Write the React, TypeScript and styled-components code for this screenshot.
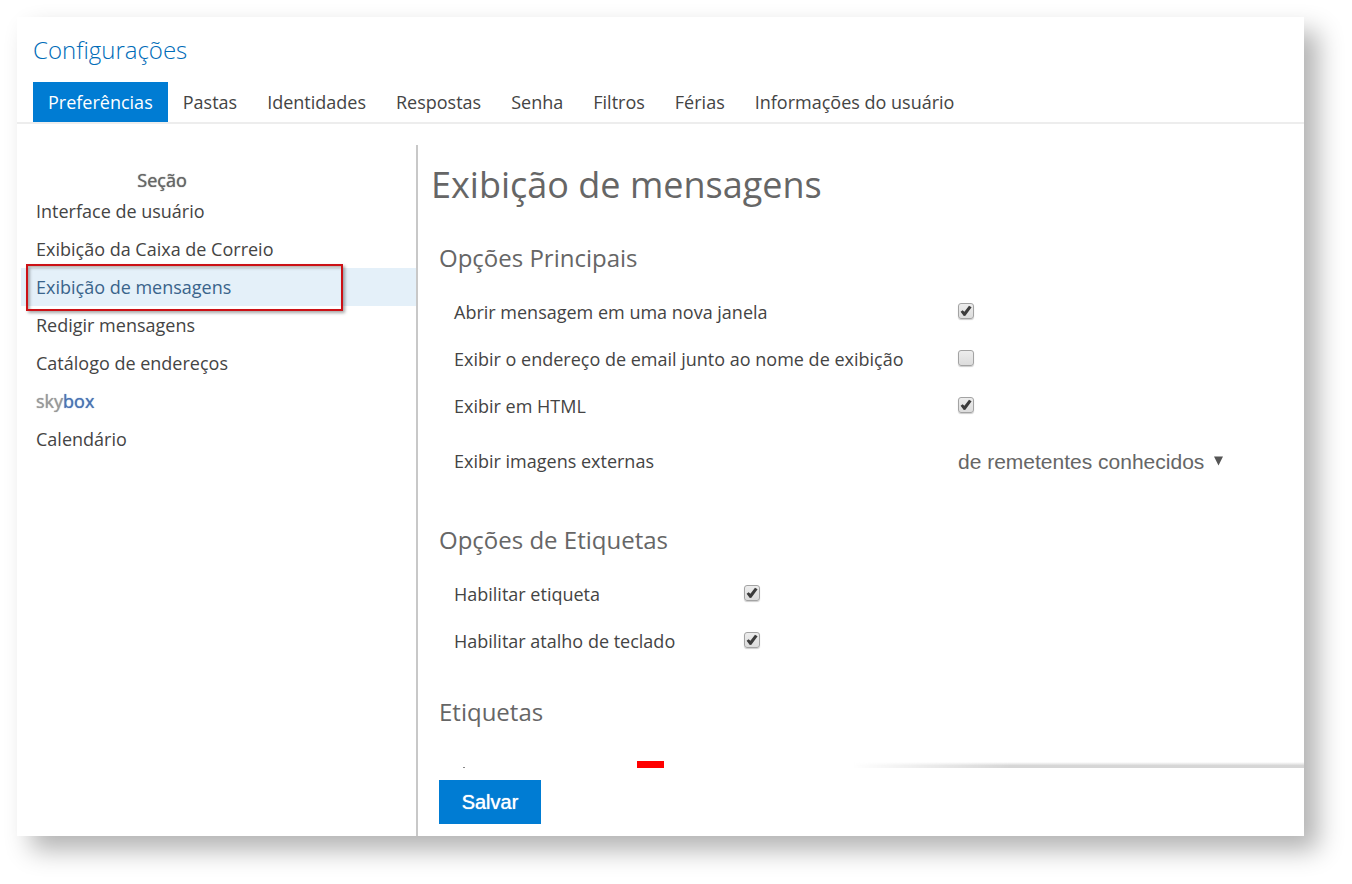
import React, { useState } from "react";
import styled, { createGlobalStyle, css } from "styled-components";

const GlobalStyle = createGlobalStyle`
  *, *::before, *::after { box-sizing: border-box; }
  body {
    margin: 0;
    background: #fff;
    color: #444;
    font: 400 18px/24px "Open Sans", sans-serif;
  }
`;

const emphasis = css`
  font-weight: 400;
  text-shadow: 0 0 1px currentColor;
`;

const Page = styled.div`
  min-height: 100vh;
  padding: 17px 48px 48px 17px;
  display: flex;
`;

const Panel = styled.div`
  flex: 1;
  min-width: 0;
  display: flex;
  flex-direction: column;
  background: #fff;
  box-shadow: 14px 14px 24px rgba(0, 0, 0, 0.3);
`;

const PageTitle = styled.h1`
  margin: 0;
  padding: 17px 16px 16px;
  color: #006cb8;
  font-size: 24px;
  font-weight: 300;
  line-height: 32px;
`;

const Tabs = styled.nav`
  display: flex;
  padding: 0 16px;
  border-bottom: 2px solid #ededed;
`;

const Tab = styled.a<{ $active?: boolean }>`
  padding: 0 15px;
  line-height: 40px;
  text-decoration: none;
  white-space: nowrap;
  color: ${(p) => (p.$active ? "#fff" : "#444")};
  background: ${(p) => (p.$active ? "#007cd3" : "transparent")};
`;

const Body = styled.div`
  flex: 1;
  display: flex;
  padding-top: 21px;
`;

const Sidebar = styled.aside`
  flex: 0 0 401px;
  padding: 24px 0 0 4px;
  border-right: 2px solid #c8c8c8;
`;

const SidebarTitle = styled.h2`
  ${emphasis}
  width: 282px;
  margin: 0;
  color: #666;
  font-size: 18px;
  line-height: 23px;
  text-align: center;
`;

const SectionList = styled.ul`
  list-style: none;
  margin: 0;
  padding: 0;
`;

const SectionItem = styled.li<{ $selected?: boolean }>`
  position: relative;
  background: ${(p) => (p.$selected ? "#e4f0f9" : "transparent")};
`;

const SectionLink = styled.a<{ $selected?: boolean }>`
  display: block;
  padding: 0 15px;
  line-height: 38px;
  text-decoration: none;
  color: ${(p) => (p.$selected ? "#3a648b" : "#444")};
`;

const Brand = styled.span<{ $blue?: boolean }>`
  ${emphasis}
  color: ${(p) => (p.$blue ? "#4a74b4" : "#999")};
`;

const Highlight = styled.span`
  position: absolute;
  inset: -4px 73px -5px 5px;
  border: 2px solid #cc1116;
  box-shadow: 2px 2px 3px rgba(0, 0, 0, 0.35), inset 2px 2px 3px rgba(0, 0, 0, 0.3);
  pointer-events: none;
`;

const Main = styled.main`
  flex: 1;
  min-width: 0;
  display: flex;
  flex-direction: column;
`;

const Content = styled.div`
  flex: 1;
  display: flex;
  flex-direction: column;
  gap: 23px;
  padding: 15px 13px 0;
`;

const Heading = styled.h2`
  margin: 0;
  color: #666;
  font-size: 36px;
  font-weight: 400;
  line-height: 50px;
`;

const Group = styled.section<{ $label: number }>`
  padding: 0 8px;
  --label: ${(p) => p.$label}px;
`;

const GroupTitle = styled.h3`
  margin: 0 0 5px;
  color: #666;
  font-size: 24px;
  font-weight: 400;
  line-height: 50px;
`;

const Row = styled.div<{ $tall?: boolean }>`
  display: grid;
  grid-template-columns: var(--label) auto;
  justify-content: start;
  align-items: center;
  height: ${(p) => (p.$tall ? 63 : 47)}px;
  padding-left: 15px;
`;

const CheckWrap = styled.span`
  display: grid;
  padding-bottom: 2px;

  > * { grid-area: 1 / 1; }
`;

const CheckInput = styled.input`
  appearance: none;
  width: 16px;
  height: 16px;
  margin: 0;
  border: 1px solid #a3a3a3;
  border-radius: 3px;
  background: linear-gradient(#ededed, #dcdcdc);
  box-shadow: 0 1px 1px rgba(0, 0, 0, 0.2);

  & + svg { visibility: hidden; }
  &:checked + svg { visibility: visible; }
`;

const CheckMark = styled.svg`
  pointer-events: none;
`;

const SelectWrap = styled.span`
  display: flex;
  align-items: center;
`;

const Select = styled.select`
  appearance: none;
  margin: 0 -20px 0 0;
  padding: 2px 28px 0 0;
  border: 0;
  border-radius: 0;
  background: transparent;
  color: #666;
  font: 21px/24px "Liberation Sans", Arial, sans-serif;
`;

const Arrow = styled.svg`
  pointer-events: none;
`;

const LabelPreview = styled.div`
  display: grid;
  grid-template-columns: var(--label) 27px;
  align-items: end;
  height: 7px;
  margin-top: 24px;
  padding-left: 15px;
`;

const Tick = styled.span`
  width: 2px;
  height: 1px;
  margin-left: 9px;
  background: #888;
`;

const Swatch = styled.span`
  height: 7px;
  background: #f00;
`;

const Footer = styled.footer`
  position: relative;
  padding: 12px 21px;
`;

const FooterShade = styled.span`
  position: absolute;
  right: 0;
  bottom: 100%;
  width: 51%;
  height: 6px;
  background: linear-gradient(to bottom, transparent, #d6d6d6 60%);
  mask-image: linear-gradient(to right, transparent, #000 35%);
`;

const SaveButton = styled.button`
  display: block;
  min-width: 102px;
  height: 44px;
  padding: 0 22px;
  border: 0;
  background: #007cd3;
  color: #fff;
  font: 20px/24px "Liberation Sans", Arial, sans-serif;
  text-shadow: 0 0 1px currentColor;
`;

const tabs = [
  "Preferências",
  "Pastas",
  "Identidades",
  "Respostas",
  "Senha",
  "Filtros",
  "Férias",
  "Informações do usuário",
];

const sections: React.ReactNode[] = [
  "Interface de usuário",
  "Exibição da Caixa de Correio",
  "Exibição de mensagens",
  "Redigir mensagens",
  "Catálogo de endereços",
  <>
    <Brand>sky</Brand>
    <Brand $blue>box</Brand>
  </>,
  "Calendário",
];

function CheckRow({ id, label, initial }: { id: string; label: string; initial?: boolean }) {
  const [checked, setChecked] = useState(Boolean(initial));
  return (
    <Row>
      <label htmlFor={id}>{label}</label>
      <CheckWrap>
        <CheckInput
          id={id}
          type="checkbox"
          checked={checked}
          onChange={(e) => setChecked(e.target.checked)}
        />
        <CheckMark width="16" height="16" viewBox="0 0 16 16" aria-hidden="true">
          <path d="M2.6 8.8 4.6 7.2 6.4 8.8 11 2.8 13.6 4.2 7.4 12.8 5.8 13Z" fill="#3c3c3c" />
        </CheckMark>
      </CheckWrap>
    </Row>
  );
}

export default function App() {
  return (
    <>
      <GlobalStyle />
      <Page>
        <Panel>
          <PageTitle>Configurações</PageTitle>
          <Tabs>
            {tabs.map((tab, i) => (
              <Tab key={tab} href="#" $active={i === 0}>
                {tab}
              </Tab>
            ))}
          </Tabs>
          <Body>
            <Sidebar>
              <SidebarTitle>Seção</SidebarTitle>
              <SectionList>
                {sections.map((section, i) => (
                  <SectionItem key={i} $selected={i === 2}>
                    <SectionLink href="#" $selected={i === 2}>
                      {section}
                    </SectionLink>
                    {i === 2 && <Highlight />}
                  </SectionItem>
                ))}
              </SectionList>
            </Sidebar>
            <Main>
              <Content>
                <Heading>Exibição de mensagens</Heading>
                <Group $label={504}>
                  <GroupTitle>Opções Principais</GroupTitle>
                  <CheckRow id="new-window" label="Abrir mensagem em uma nova janela" initial />
                  <CheckRow
                    id="show-address"
                    label="Exibir o endereço de email junto ao nome de exibição"
                  />
                  <CheckRow id="show-html" label="Exibir em HTML" initial />
                  <Row $tall>
                    <label htmlFor="images">Exibir imagens externas</label>
                    <SelectWrap>
                      <Select id="images" defaultValue="known">
                        <option value="known">de remetentes conhecidos</option>
                      </Select>
                      <Arrow width="11" height="10" viewBox="0 0 11 10" aria-hidden="true">
                        <path d="M1 0.5H10L5.5 9.5Z" fill="#555" />
                      </Arrow>
                    </SelectWrap>
                  </Row>
                </Group>
                <Group $label={290}>
                  <GroupTitle>Opções de Etiquetas</GroupTitle>
                  <CheckRow id="enable-label" label="Habilitar etiqueta" initial />
                  <CheckRow id="enable-shortcut" label="Habilitar atalho de teclado" initial />
                </Group>
                <Group $label={183}>
                  <GroupTitle>Etiquetas</GroupTitle>
                  <LabelPreview>
                    <Tick />
                    <Swatch />
                  </LabelPreview>
                </Group>
              </Content>
              <Footer>
                <FooterShade />
                <SaveButton type="button">Salvar</SaveButton>
              </Footer>
            </Main>
          </Body>
        </Panel>
      </Page>
    </>
  );
}
